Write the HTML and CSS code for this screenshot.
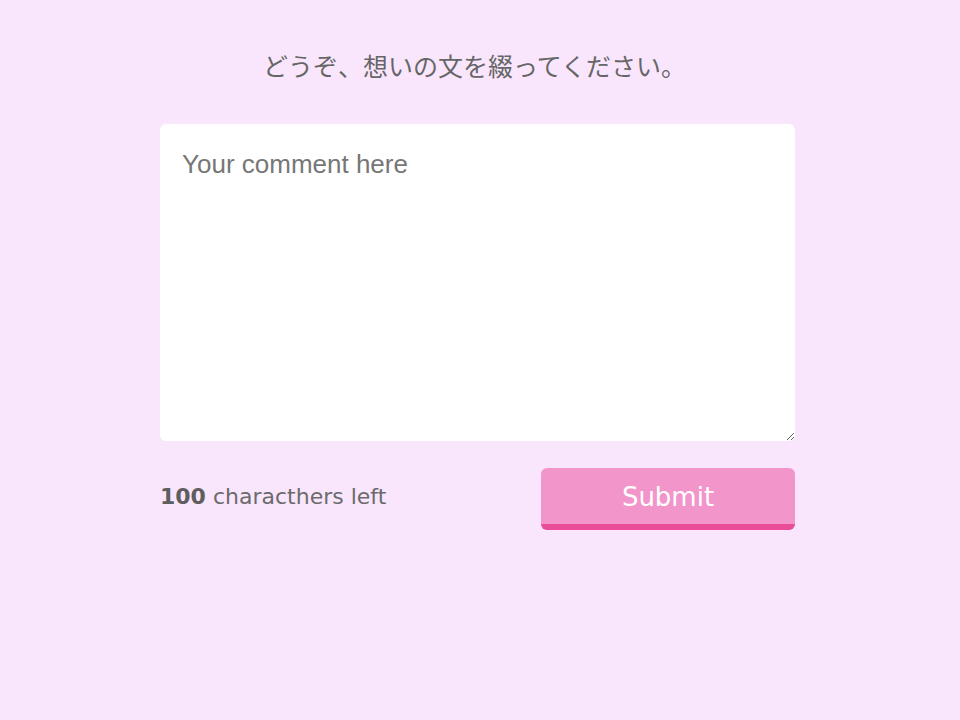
FILE: index.html
```html
<!DOCTYPE html>
<html lang="ja">
<head>
<meta charset="utf-8">
<title>Comment</title>
<link rel="stylesheet" href="styles.css">
</head>
<body>
<main class="page">
  <h1 class="title">どうぞ、想いの文を綴ってください。</h1>
  <form class="form">
    <textarea class="comment" placeholder="Your comment here"></textarea>
    <div class="footer">
      <p class="count"><b>100</b> characthers left</p>
      <button type="button" class="submit">Submit</button>
    </div>
  </form>
</main>
</body>
</html>
```

FILE: styles.css
```css
html, body {
  margin: 0;
  padding: 0;
}
body {
  background: #f9e6fd;
  width: 960px;
  height: 720px;
}
.page {
  width: 635px;
  margin-left: 160px;
  padding-top: 47px;
}
.title {
  margin: 0 6px 0 0;
  font-family: "Noto Sans CJK JP", sans-serif;
  font-weight: 400;
  font-size: 25px;
  line-height: 36px;
  color: #666;
  text-align: center;
}
.form {
  margin-top: 41px;
}
.comment {
  display: block;
  box-sizing: border-box;
  width: 635px;
  height: 317px;
  border: none;
  border-radius: 6px;
  background: #fff;
  padding: 25px 22px;
  font-family: "Liberation Sans", Arial, sans-serif;
  font-size: 26px;
  color: #555;
  outline: none;
  resize: vertical;
}
.comment::placeholder {
  color: #777;
}
.footer {
  display: flex;
  justify-content: space-between;
  align-items: flex-start;
  margin-top: 27px;
}
.count {
  margin: 15px 0 0;
  font-family: "DejaVu Sans", Verdana, sans-serif;
  font-size: 22px;
  line-height: 28px;
  color: #6b6b6b;
}
.count b {
  color: #5e5e5e;
}
.submit {
  width: 254px;
  height: 62px;
  box-sizing: border-box;
  border: none;
  border-bottom: 6px solid #ea4c9a;
  border-radius: 6px;
  background: #f195ca;
  color: #fff;
  font-family: "DejaVu Sans", Verdana, sans-serif;
  font-size: 26px;
  padding: 2px 0 0;
}
```
